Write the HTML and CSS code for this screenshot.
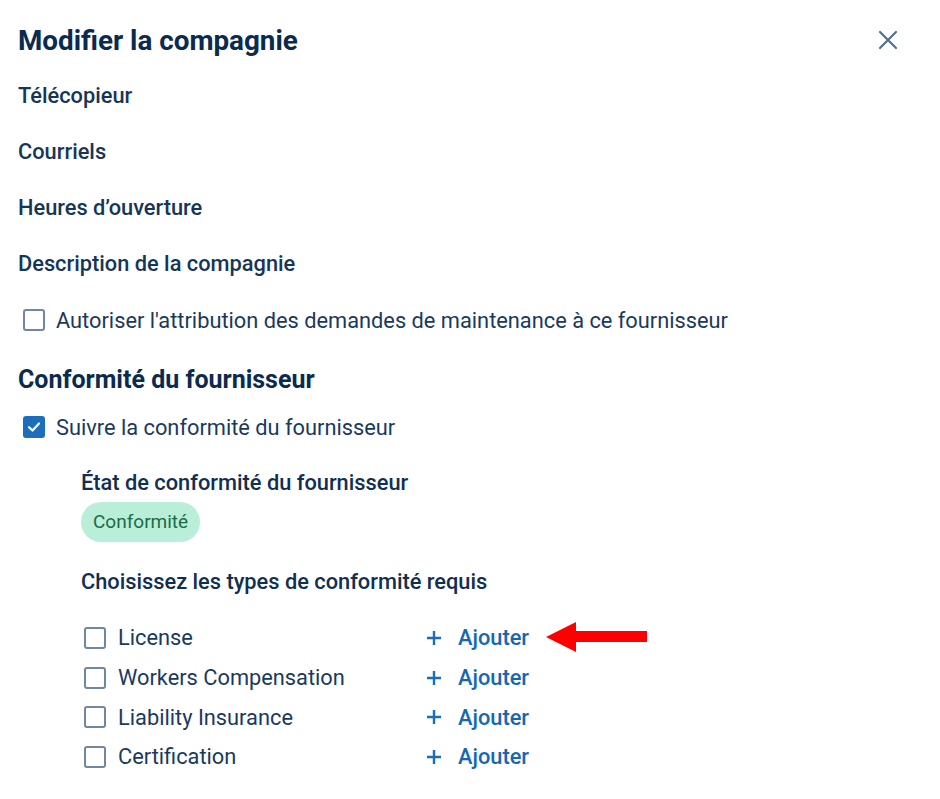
FILE: index.html
```html
<!DOCTYPE html>
<html lang="fr">
<head>
<meta charset="utf-8">
<title>Modifier la compagnie</title>
<link rel="stylesheet" href="styles.css">
</head>
<body>
<div class="panel">
  <div class="header">
    <h1 class="title">Modifier la compagnie</h1>
    <button class="close" aria-label="Fermer">
      <svg width="20" height="20" viewBox="0 0 20 20"><path d="M2 2 L18 18 M18 2 L2 18" stroke="#4f7191" stroke-width="2.2" stroke-linecap="round" fill="none"/></svg>
    </button>
  </div>
  <div class="label">Télécopieur</div>
  <div class="label">Courriels</div>
  <div class="label">Heures d’ouverture</div>
  <div class="label">Description de la compagnie</div>
  <label class="check-row">
    <span class="box"></span>
    <span class="check-text">Autoriser l'attribution des demandes de maintenance à ce fournisseur</span>
  </label>
  <h2 class="section-title">Conformité du fournisseur</h2>
  <label class="check-row track">
    <span class="box checked">
      <svg width="16" height="16" viewBox="0 0 16 16"><path d="M3 8.2 L6.5 11.5 L13 4.5" stroke="#fff" stroke-width="2.2" fill="none" stroke-linecap="round" stroke-linejoin="round"/></svg>
    </span>
    <span class="check-text">Suivre la conformité du fournisseur</span>
  </label>
  <div class="sub">
    <div class="sub-label state">État de conformité du fournisseur</div>
    <span class="badge">Conformité</span>
    <div class="sub-label choose">Choisissez les types de conformité requis</div>
    <div class="types">
      <label class="type"><span class="box"></span><span class="type-text">License</span></label>
      <button class="add">
        <svg width="16" height="16" viewBox="0 0 16 16"><path d="M8 1 V15 M1 8 H15" stroke="#1a6db8" stroke-width="2.4" fill="none"/></svg>
        <span>Ajouter</span>
      </button>
      <label class="type"><span class="box"></span><span class="type-text">Workers Compensation</span></label>
      <button class="add">
        <svg width="16" height="16" viewBox="0 0 16 16"><path d="M8 1 V15 M1 8 H15" stroke="#1a6db8" stroke-width="2.4" fill="none"/></svg>
        <span>Ajouter</span>
      </button>
      <label class="type"><span class="box"></span><span class="type-text">Liability Insurance</span></label>
      <button class="add">
        <svg width="16" height="16" viewBox="0 0 16 16"><path d="M8 1 V15 M1 8 H15" stroke="#1a6db8" stroke-width="2.4" fill="none"/></svg>
        <span>Ajouter</span>
      </button>
      <label class="type"><span class="box"></span><span class="type-text">Certification</span></label>
      <button class="add">
        <svg width="16" height="16" viewBox="0 0 16 16"><path d="M8 1 V15 M1 8 H15" stroke="#1a6db8" stroke-width="2.4" fill="none"/></svg>
        <span>Ajouter</span>
      </button>
    </div>
  </div>
  <svg class="arrow" width="104" height="32" viewBox="0 0 104 32"><polygon points="0,15 30,0 30,9 101,9 101,20 30,20 30,30" fill="#ff0000"/></svg>
</div>
</body>
</html>
```

FILE: styles.css
```css
* { box-sizing: border-box; }
html, body { margin: 0; padding: 0; background: #ffffff; }
body {
  font-family: Roboto, "Liberation Sans", sans-serif;
  color: #0f2d50;
  width: 940px;
  height: 799px;
  overflow: hidden;
}
.panel {
  position: relative;
  padding: 12px 42px 0 18px;
}
.header {
  display: flex;
  align-items: center;
  justify-content: space-between;
  height: 56px;
}
.title {
  margin: 0;
  font-size: 27.8px;
  font-weight: 700;
  color: #0b2a4f;
}
.close {
  border: 0;
  background: none;
  padding: 0;
  width: 20px;
  height: 20px;
  display: flex;
  cursor: pointer;
}
.label {
  height: 56px;
  line-height: 56px;
  font-size: 21.8px;
  font-weight: 500;
  color: #163658;
}
.check-row {
  display: flex;
  align-items: center;
  height: 56px;
  padding-left: 5px;
  gap: 11px;
}
.box {
  width: 22px;
  height: 22px;
  border: 2px solid #70879d;
  border-radius: 3px;
  display: flex;
  align-items: center;
  justify-content: center;
  flex: none;
  background: #fff;
}
.box.checked {
  background: #1c6ebd;
  border-color: #1c6ebd;
}
.check-text {
  font-size: 21.8px;
  color: #1a3a5c;
}
.section-title {
  margin: 0;
  height: 64px;
  line-height: 64px;
  font-size: 25px;
  font-weight: 700;
  color: #0b2a4f;
}
.check-row.track {
  height: 30px;
}
.sub {
  padding-left: 63px;
  display: flex;
  flex-direction: column;
  align-items: flex-start;
}
.sub-label {
  font-size: 21.8px;
  font-weight: 500;
  line-height: 28px;
  color: #102f52;
}
.state { margin-top: 27px; }
.badge {
  margin-top: 5px;
  height: 40px;
  line-height: 40px;
  padding: 0 12px;
  border-radius: 20px;
  background: #b9efd9;
  color: #1c6a47;
  font-size: 19px;
}
.choose { margin-top: 26px; }
.types {
  margin-top: 22px;
  display: grid;
  grid-template-columns: 345px auto;
  grid-auto-rows: 39.7px;
  align-items: center;
}
.type {
  display: flex;
  align-items: center;
  gap: 12px;
  padding-left: 3px;
}
.type-text {
  font-size: 21.8px;
  color: #1a3a5c;
}
.add {
  border: 0;
  background: none;
  padding: 0;
  display: flex;
  align-items: center;
  gap: 16px;
  font-family: inherit;
  font-size: 21.8px;
  font-weight: 500;
  color: #1468b3;
  cursor: pointer;
}
.arrow {
  position: absolute;
  left: 546px;
  top: 622px;
}
```
